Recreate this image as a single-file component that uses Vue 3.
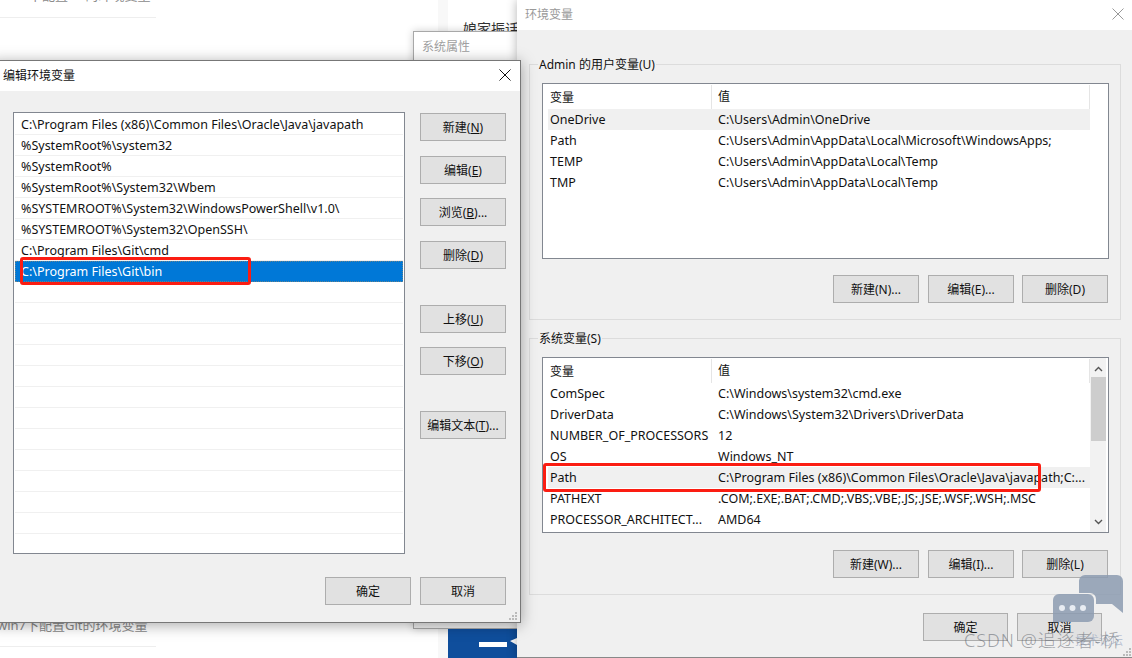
<script setup>
const paths = [
  'C:\\Program Files (x86)\\Common Files\\Oracle\\Java\\javapath',
  '%SystemRoot%\\system32',
  '%SystemRoot%',
  '%SystemRoot%\\System32\\Wbem',
  '%SYSTEMROOT%\\System32\\WindowsPowerShell\\v1.0\\',
  '%SYSTEMROOT%\\System32\\OpenSSH\\',
  'C:\\Program Files\\Git\\cmd',
  'C:\\Program Files\\Git\\bin',
  '', '', '', '', '', '', '', '', '', '', '', '', ''
]
const sideButtons = [
  { pre: '新建(', key: 'N', post: ')', cls: 'g15' },
  { pre: '编辑(', key: 'E', post: ')', cls: 'g14' },
  { pre: '浏览(', key: 'B', post: ')...', cls: 'g15' },
  { pre: '删除(', key: 'D', post: ')', cls: 'g36' },
  { pre: '上移(', key: 'U', post: ')', cls: 'g14' },
  { pre: '下移(', key: 'O', post: ')', cls: 'g36' },
  { pre: '编辑文本(', key: 'T', post: ')...', cls: '' }
]
const userVars = [
  ['OneDrive', 'C:\\Users\\Admin\\OneDrive', true],
  ['Path', 'C:\\Users\\Admin\\AppData\\Local\\Microsoft\\WindowsApps;'],
  ['TEMP', 'C:\\Users\\Admin\\AppData\\Local\\Temp'],
  ['TMP', 'C:\\Users\\Admin\\AppData\\Local\\Temp']
]
const sysVars = [
  ['ComSpec', 'C:\\Windows\\system32\\cmd.exe'],
  ['DriverData', 'C:\\Windows\\System32\\Drivers\\DriverData'],
  ['NUMBER_OF_PROCESSORS', '12'],
  ['OS', 'Windows_NT'],
  ['Path', 'C:\\Program Files (x86)\\Common Files\\Oracle\\Java\\javapath;C:...', true],
  ['PATHEXT', '.COM;.EXE;.BAT;.CMD;.VBS;.VBE;.JS;.JSE;.WSF;.WSH;.MSC'],
  ['PROCESSOR_ARCHITECT...', 'AMD64']
]
</script>

<template>
  <div class="desk">
    <div class="articles">
      <div class="article first"><span>win7下配置Git的环境变量</span></div>
      <div class="article last">win7下配置Git的环境变量</div>
    </div>
    <div class="strip"></div>
    <div class="side-title">娘家振话</div>

    <div class="win sysprops">
      <div class="sys-title">系统属性</div>
      <div class="sys-body"></div>
    </div>
    <div class="blue">
      <span class="blue-bar"></span>
      <span class="blue-tip"></span>
    </div>

    <div class="win envwin">
      <div class="titlebar env-title">
        <span>环境变量</span>
        <svg class="close" width="12" height="12" viewBox="0 0 12 12"><path d="M.5.5l11 11M11.5.5l-11 11" stroke="#999" fill="none" /></svg>
      </div>
      <div class="env-body">
        <div class="group user">
          <span class="legend">Admin 的用户变量(U)</span>
          <div class="vlist">
            <div class="vinner">
              <div class="vrow vhead"><span class="c1">变量</span><span class="c2">值</span></div>
              <div v-for="r in userVars" :key="r[0]" class="vrow" :class="{ hi: r[2] }">
                <span class="c1">{{ r[0] }}</span><span class="c2">{{ r[1] }}</span>
              </div>
            </div>
          </div>
          <div class="btnrow">
            <button class="btn w86">新建(N)...</button>
            <button class="btn w86 gap9">编辑(E)...</button>
            <button class="btn w86 gap8">删除(D)</button>
          </div>
        </div>
        <div class="group sys">
          <span class="legend">系统变量(S)</span>
          <div class="vlist">
            <div class="vinner">
              <div class="vrow vhead"><span class="c1">变量</span><span class="c2">值</span></div>
              <div v-for="r in sysVars" :key="r[0]" class="vrow" :class="{ hi: r[2] }">
                <span class="c1">{{ r[0] }}</span><span class="c2">{{ r[1] }}</span>
              </div>
            </div>
            <div class="scroll">
              <svg width="9" height="6" viewBox="0 0 9 6"><path d="M1 5l3.5-3.5L8 5" stroke="#555" stroke-width="1.4" fill="none" /></svg>
              <div class="thumb"></div>
              <svg class="down" width="9" height="6" viewBox="0 0 9 6"><path d="M1 1l3.5 3.5L8 1" stroke="#555" stroke-width="1.4" fill="none" /></svg>
            </div>
          </div>
          <div class="btnrow">
            <button class="btn w86">新建(W)...</button>
            <button class="btn w86 gap9">编辑(I)...</button>
            <button class="btn w86 gap8">删除(L)</button>
          </div>
        </div>
        <div class="env-foot">
          <button class="btn w85">确定</button>
          <button class="btn w85 gap9">取消</button>
        </div>
      </div>
    </div>
    <svg class="grip-env" width="8" height="8" viewBox="0 0 8 8" fill="#bbb"><rect x="6" y="0" width="2" height="2" /><rect x="3" y="3" width="2" height="2" /><rect x="6" y="3" width="2" height="2" /><rect x="0" y="6" width="2" height="2" /><rect x="3" y="6" width="2" height="2" /><rect x="6" y="6" width="2" height="2" /></svg>

    <div class="win editwin">
      <div class="titlebar edit-title">
        <span>编辑环境变量</span>
        <svg class="close" width="12" height="12" viewBox="0 0 12 12"><path d="M.5.5l11 11M11.5.5l-11 11" stroke="#111" fill="none" /></svg>
      </div>
      <div class="edit-main">
        <div class="pathlist">
          <div v-for="(p, i) in paths" :key="i" class="prow" :class="{ sel: i === 7 }">{{ p }}</div>
        </div>
        <div class="sidebtns">
          <button v-for="b in sideButtons" :key="b.key" class="btn w86" :class="b.cls">{{ b.pre }}<u>{{ b.key }}</u>{{ b.post }}</button>
        </div>
      </div>
      <div class="edit-foot">
        <button class="btn w86">确定</button>
        <button class="btn w86 gap9">取消</button>
      </div>
      <svg class="grip" width="8" height="8" viewBox="0 0 8 8" fill="#bbb"><rect x="6" y="0" width="2" height="2" /><rect x="3" y="3" width="2" height="2" /><rect x="6" y="3" width="2" height="2" /><rect x="0" y="6" width="2" height="2" /><rect x="3" y="6" width="2" height="2" /><rect x="6" y="6" width="2" height="2" /></svg>
    </div>

    <div class="redbox red-left"></div>
    <div class="redbox red-right"></div>

    <svg class="bubbles" width="74" height="50" viewBox="0 0 74 50">
      <path d="M33 0h32a6 6 0 0 1 6 6v32L60 29H44v-5a6 6 0 0 0-6-6H27V6a6 6 0 0 1 6-6z" fill="#8c9bb0" opacity=".85" />
      <path d="M7 19h29a6 6 0 0 1 6 6v16a6 6 0 0 1-6 6H1V25a6 6 0 0 1 6-6z" fill="#8c9bb0" opacity=".85" />
      <circle cx="10" cy="33" r="3" fill="#e8ecf2" /><circle cx="20.500" cy="33" r="3" fill="#e8ecf2" /><circle cx="31" cy="33" r="3" fill="#e8ecf2" />
    </svg>
    <div class="ghost">技术论坛</div>
    <div class="mark">CSDN @追逐者-桥</div>
  </div>
</template>

<style>
html, body { margin: 0; background: #fff; overflow: hidden; }
</style>

<style scoped>
.desk {
  position: relative;
  width: 1132px;
  height: 658px;
  overflow: hidden;
  background: #fff;
  font-family: "Noto Sans", "Noto Sans CJK SC", sans-serif;
  font-size: 12px;
  color: #111;
}
.articles {
  position: absolute;
  left: 0;
  top: 0;
  width: 156px;
  display: flex;
  flex-direction: column;
  color: #8a8a8a;
  font-size: 13px;
}
.article {
  box-sizing: border-box;
  border-bottom: 1px solid #eee;
  white-space: nowrap;
}
.article.first { height: 18px; overflow: hidden; }
.article.first span { display: block; margin-top: -14px; line-height: 18px; }
.article.last { height: 31px; margin-top: 598px; line-height: 18px; padding-top: 0; margin-left: -3px; width: 159px; }
.strip { position: absolute; left: 438px; top: 0; width: 10px; height: 658px; background: #f8f8f8; }
.side-title { position: absolute; left: 463px; top: 18px; font-size: 14px; color: #333; white-space: nowrap; }
.win { position: absolute; box-sizing: border-box; }
.sysprops {
  left: 413px;
  top: 31px;
  width: 130px;
  height: 598px;
  border: 1px solid #a8a8a8;
  background: #f0f0f0;
  box-shadow: 0 0 8px rgba(0, 0, 0, .2);
}
.sys-title { height: 28px; line-height: 29px; padding-left: 8px; background: #fff; color: #a0a0a0; font-size: 12px; }
.blue { position: absolute; left: 448px; top: 629px; width: 69px; height: 29px; background: #0f4e9c; }
.blue-bar { position: absolute; left: 31px; top: 13px; width: 28px; height: 5px; background: #fff; }
.blue-tip { position: absolute; left: 62px; top: 9px; width: 0; height: 0; border-right: 7px solid #fff; border-top: 3px solid transparent; border-bottom: 4px solid transparent; }
.titlebar {
  display: flex;
  align-items: center;
  justify-content: space-between;
  background: #fff;
}
.envwin {
  left: 517px;
  top: 0;
  width: 620px;
  height: 658px;
  background: #f0f0f0;
  box-shadow: 0 0 10px rgba(0, 0, 0, .3);
  border-bottom: 1px solid #888;
}
.env-title { height: 30px; padding: 0 13px 2px 8px; box-sizing: border-box; color: #999; }
.env-body { padding: 34px 16px 0 12px; width: 592px; }
.group {
  position: relative;
  box-sizing: border-box;
  width: 592px;
  border: 1px solid #dcdcdc;
  padding: 18px 12px 0 12px;
}
.group.user { height: 256px; }
.group.sys { height: 257px; margin-top: 18px; }
.legend {
  position: absolute;
  left: 8px;
  top: -8px;
  padding: 0 1px;
  background: #f0f0f0;
  line-height: 15px;
}
.vlist {
  box-sizing: border-box;
  height: 176px;
  width: 567px;
  border: 1px solid #828790;
  background: #fff;
  display: flex;
  overflow: hidden;
}
.vinner { width: 542px; margin-left: 5px; flex: none; font-size: 12.5px; }
.vrow { display: flex; height: 21px; align-items: center; white-space: nowrap; }
.vrow.hi { background: #f0f0f0; }
.vhead { height: 25px; font-size: 12px; }
.c1 { width: 163px; box-sizing: border-box; padding-left: 2px; overflow: hidden; flex: none; }
.c2 { padding-left: 7px; flex: 1; }
.vhead .c2 { border-left: 1px solid #e5e5e5; padding-left: 6px; height: 24px; line-height: 24px; border-right: 1px solid #e5e5e5; }
.scroll {
  width: 16px;
  display: flex;
  flex-direction: column;
  align-items: center;
  padding-top: 8px;
  background: #f2f2f2;
}
.thumb { width: 15px; height: 64px; margin-top: 5px; background: #cdcdcd; }
.down { margin-top: 78px; }
.btnrow { display: flex; justify-content: flex-end; margin-top: 16px; }
.sys .btnrow { margin-top: 17px; }
.btn {
  box-sizing: border-box;
  height: 28px;
  padding: 0 0 1px;
  border: 1px solid #adadad;
  background: #e1e1e1;
  color: #111;
  font: inherit;
  white-space: nowrap;
}
.w86 { width: 86px; }
.w85 { width: 85px; }
.gap9 { margin-left: 9px; }
.gap8 { margin-left: 8px; }
.env-foot { display: flex; justify-content: flex-end; margin-top: 18px; padding-right: 19px; }
.grip-env { position: absolute; left: 1123px; top: 648px; }
.editwin {
  left: -10px;
  top: 60px;
  width: 531px;
  height: 563px;
  background: #f0f0f0;
  border: 1px solid #777;
  box-shadow: 0 2px 14px rgba(0, 0, 0, .35);
}
.edit-title { height: 30px; padding: 0 9px 2px 12px; box-sizing: border-box; font-size: 12px; }
.edit-main { display: flex; padding: 21px 0 0 22px; }
.pathlist {
  box-sizing: border-box;
  width: 392px;
  height: 442px;
  border: 1px solid #828790;
  background: #fff;
  padding: 1px 1px 0;
  overflow: hidden;
  flex: none;
  font-size: 12.5px;
}
.prow {
  box-sizing: border-box;
  height: 21px;
  line-height: 22px;
  padding-left: 6px;
  border-bottom: 1px solid #f0f0f0;
  white-space: nowrap;
}
.prow.sel { background: #0078d7; color: #fff; border-bottom-color: #0078d7; outline: 1px dotted rgba(190, 140, 80, .55); outline-offset: -1px; }
.sidebtns { display: flex; flex-direction: column; margin: 1px 0 0 15px; }
.g15 { margin-bottom: 15px; }
.g14 { margin-bottom: 14px; }
.g36 { margin-bottom: 36px; }
.edit-foot { display: flex; justify-content: flex-end; margin-top: 23px; padding-right: 14px; }
.grip { position: absolute; right: 3px; bottom: 2px; }
.redbox { position: absolute; box-sizing: border-box; border: 3px solid #fb1d12; border-radius: 3px; }
.red-left { left: 20px; top: 257px; width: 231px; height: 28px; }
.red-right { left: 543px; top: 463px; width: 498px; height: 29px; }
.bubbles { position: absolute; left: 1052px; top: 575px; }
.ghost {
  position: absolute;
  left: 1075px;
  top: 633px;
  font-size: 12px;
  line-height: 16px;
  color: rgba(150, 165, 190, .6);
  white-space: nowrap;
}
.mark {
  position: absolute;
  left: 964px;
  top: 628px;
  font-size: 18px;
  letter-spacing: 1px;
  font-weight: 300;
  line-height: 24px;
  color: rgba(90, 95, 105, .55);
  white-space: nowrap;
}
</style>
